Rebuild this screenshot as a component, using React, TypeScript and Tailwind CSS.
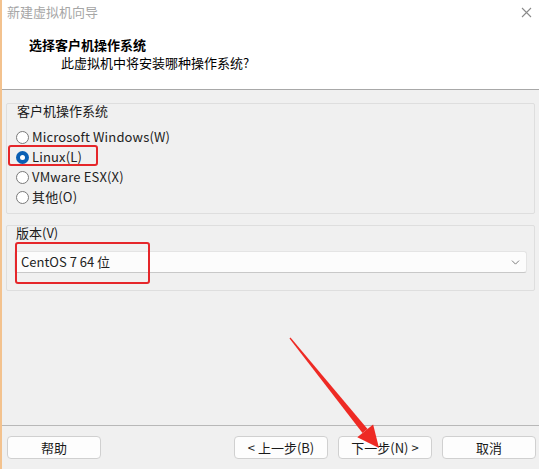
import React from 'react'
import { ChevronDown } from 'lucide-react'

const osList = [
  { label: 'Microsoft Windows(W)', checked: false },
  { label: 'Linux(L)', checked: true },
  { label: 'VMware ESX(X)', checked: false },
  { label: '其他(O)', checked: false },
]

function Radio({ checked }: { checked: boolean }) {
  if (checked) {
    return (
      <span className="w-[13px] h-[13px] rounded-full bg-[#0a5fb4] flex items-center justify-center shrink-0">
        <span className="w-[5px] h-[5px] rounded-full bg-white" />
      </span>
    )
  }
  return <span className="w-[13px] h-[13px] rounded-full border border-[#7a7a7a] bg-white shrink-0" />
}

function Btn({ children }: { children: React.ReactNode }) {
  return (
    <button className="w-[94px] h-[23px] bg-[#fdfdfd] border border-[#d0d0d0] rounded-[4px] text-[13px] leading-[21px] text-[#1a1a1a] text-center">
      {children}
    </button>
  )
}

export default function App() {
  return (
    <div className="relative w-[539px] h-[469px] bg-[#f0f0f0] border-l-2 border-[#f3c28e] flex flex-col overflow-hidden font-['Noto_Sans_CJK_SC',sans-serif] text-[#1a1a1a]">
      {/* header */}
      <div className="h-[90px] bg-white border-b border-[#a8a8a8] shrink-0">
        <div className="h-[24px] flex items-center justify-between pl-[5px] pr-[7px]">
          <span className="text-[13px] leading-[18px] text-[#a6a6a6]">新建虚拟机向导</span>
          <svg width="11" height="11" viewBox="0 0 11 11">
            <path d="M1 1L10 10M10 1L1 10" stroke="#8a8a8a" strokeWidth="1.1" />
          </svg>
        </div>
        <div className="mt-[12px] pl-[27px] text-[13px] leading-[18px] font-bold text-black">选择客户机操作系统</div>
        <div className="pl-[59px] text-[13px] leading-[18px] text-black">此虚拟机中将安装哪种操作系统?</div>
      </div>

      {/* body */}
      <div className="px-[4px] pt-[13px] flex flex-col">
        <div className="h-[111px] border border-[#dedede] rounded-[2px] pl-[9px] flex flex-col">
          <div className="text-[13px] leading-[14px] pl-[1px]">客户机操作系统</div>
          <div className="mt-[9px] flex flex-col">
            {osList.map((o) => (
              <div key={o.label} className="h-[20px] flex items-center gap-[3px]">
                <Radio checked={o.checked} />
                <span className="text-[13px] leading-[16px] tracking-[0.15px] text-[#222]">{o.label}</span>
              </div>
            ))}
          </div>
        </div>

        <div className="mt-[11px] h-[66px] border border-[#dedede] rounded-[2px] pl-[7px] pr-[7px] flex flex-col">
          <div className="text-[13px] leading-[14px] pl-[2px]">版本(V)</div>
          <div className="mt-[11px] h-[22px] bg-[#fcfcfc] border border-[#e4e4e4] border-b-[#c8c8c8] rounded-[3px] flex items-center justify-between pl-[6px] pr-[4px]">
            <span className="text-[13px] leading-[16px] text-[#222]">CentOS 7 64 位</span>
            <ChevronDown size={13} strokeWidth={1.8} color="#7a7a7a" />
          </div>
        </div>
      </div>

      <div className="flex-1" />

      {/* footer */}
      <div className="h-[44px] border-t border-[#b8b8b8] shrink-0 flex items-start pt-[10px] pl-[5px] pr-[3px]">
        <Btn>帮助</Btn>
        <div className="flex-1" />
        <div className="flex gap-[10px]">
          <Btn>&lt; 上一步(B)</Btn>
          <Btn>下一步(N) &gt;</Btn>
          <Btn>取消</Btn>
        </div>
      </div>

      {/* annotations */}
      <div className="absolute left-[6px] top-[145px] w-[90px] h-[21px] border-2 border-[#e5262a] rounded-[3px]" />
      <div className="absolute left-[13px] top-[242px] w-[135px] h-[42px] border-2 border-[#e5262a] rounded-[3px]" />
      <svg className="absolute left-[-2px] top-0" width="539" height="469" viewBox="0 0 539 469">
        <polygon points="289.5,338.6 290.5,337.4 367.5,429 362.5,433" fill="#ee2a24" />
        <polygon points="379,448 357.3,437.3 373.1,424.4" fill="#ee2a24" />
      </svg>
    </div>
  )
}
